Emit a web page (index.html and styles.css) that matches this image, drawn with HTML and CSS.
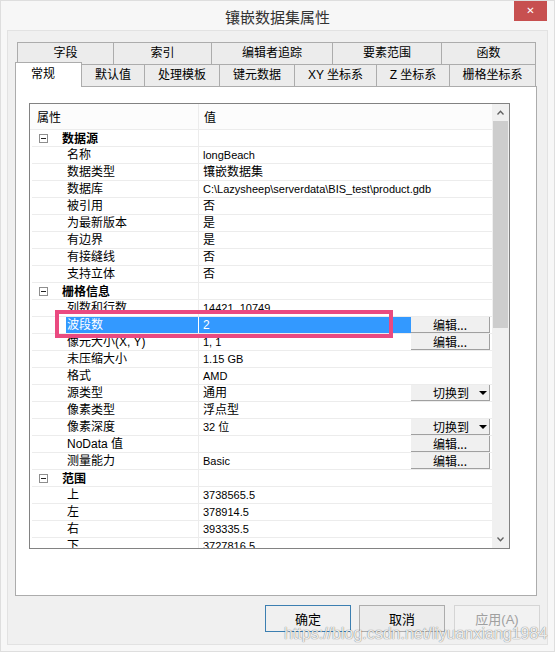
FILE: index.html
```html
<!DOCTYPE html>
<html lang="zh-CN">
<head>
    <meta charset="UTF-8">
    <title>镶嵌数据集属性</title>
    <link rel="stylesheet" href="styles.css">
</head>
<body>
<div class="window">
    <!-- 标题栏 -->
    <div class="titlebar">
        <div class="title">镶嵌数据集属性</div>
        <div class="close">&#x2715;</div>
    </div>

    <div class="client">
        <!-- 选项卡 -->
        <div class="tabs-top">
            <div class="tab" style="width:96px">字段</div>
            <div class="tab" style="width:98px">索引</div>
            <div class="tab" style="width:121px">编辑者追踪</div>
            <div class="tab" style="width:109px">要素范围</div>
            <div class="tab last" style="width:95px">函数</div>
        </div>
        <div class="tabs-bottom">
            <div class="tab active" style="width:67px">常规</div>
            <div class="tab" style="width:63px">默认值</div>
            <div class="tab" style="width:75px">处理模板</div>
            <div class="tab" style="width:75px">键元数据</div>
            <div class="tab" style="width:82px">XY 坐标系</div>
            <div class="tab" style="width:73px">Z 坐标系</div>
            <div class="tab last" style="width:87px">栅格坐标系</div>
        </div>

        <div class="panel">
            <div class="grid">
                <div class="grid-main">
                    <div class="grid-head">
                        <div class="h-name">属性</div>
                        <div class="h-val">值</div>
                    </div>

                    <div class="row cat"><div class="name"><span class="minus"></span>数据源</div><div class="val"><span class="v"></span></div></div>
                    <div class="row"><div class="name">名称</div><div class="val"><span class="v">longBeach</span></div></div>
                    <div class="row"><div class="name">数据类型</div><div class="val"><span class="v cn">镶嵌数据集</span></div></div>
                    <div class="row"><div class="name">数据库</div><div class="val"><span class="v">C:\Lazysheep\serverdata\BIS_test\product.gdb</span></div></div>
                    <div class="row"><div class="name">被引用</div><div class="val"><span class="v cn">否</span></div></div>
                    <div class="row"><div class="name">为最新版本</div><div class="val"><span class="v cn">是</span></div></div>
                    <div class="row"><div class="name">有边界</div><div class="val"><span class="v cn">是</span></div></div>
                    <div class="row"><div class="name">有接缝线</div><div class="val"><span class="v cn">否</span></div></div>
                    <div class="row"><div class="name">支持立体</div><div class="val"><span class="v cn">否</span></div></div>

                    <div class="row cat"><div class="name"><span class="minus"></span>栅格信息</div><div class="val"><span class="v"></span></div></div>
                    <div class="row"><div class="name">列数和行数</div><div class="val"><span class="v">14421, 10749</span></div></div>
                    <div class="row sel"><div class="name">波段数</div><div class="val"><span class="v">2</span><span class="cell-btn">编辑...</span></div></div>
                    <div class="row"><div class="name">像元大小(X, Y)</div><div class="val"><span class="v">1, 1</span><span class="cell-btn">编辑...</span></div></div>
                    <div class="row"><div class="name">未压缩大小</div><div class="val"><span class="v">1.15 GB</span></div></div>
                    <div class="row"><div class="name">格式</div><div class="val"><span class="v">AMD</span></div></div>
                    <div class="row"><div class="name">源类型</div><div class="val"><span class="v cn">通用</span><span class="cell-btn drop">切换到<span class="arrow"></span></span></div></div>
                    <div class="row"><div class="name">像素类型</div><div class="val"><span class="v cn">浮点型</span></div></div>
                    <div class="row"><div class="name">像素深度</div><div class="val"><span class="v">32 位</span><span class="cell-btn drop">切换到<span class="arrow"></span></span></div></div>
                    <div class="row"><div class="name">NoData 值</div><div class="val"><span class="v"></span><span class="cell-btn">编辑...</span></div></div>
                    <div class="row"><div class="name">测量能力</div><div class="val"><span class="v">Basic</span><span class="cell-btn">编辑...</span></div></div>

                    <div class="row cat"><div class="name"><span class="minus"></span>范围</div><div class="val"><span class="v"></span></div></div>
                    <div class="row"><div class="name">上</div><div class="val"><span class="v">3738565.5</span></div></div>
                    <div class="row"><div class="name">左</div><div class="val"><span class="v">378914.5</span></div></div>
                    <div class="row"><div class="name">右</div><div class="val"><span class="v">393335.5</span></div></div>
                    <div class="row"><div class="name">下</div><div class="val"><span class="v">3727816.5</span></div></div>
                </div>

                <!-- 滚动条 -->
                <div class="sb">
                    <div class="sb-arrow"><svg width="7" height="5" viewBox="0 0 7 5"><path d="M0.5 4.5 L3.5 1.2 L6.5 4.5" fill="none" stroke="#606060" stroke-width="1.3"/></svg></div>
                    <div class="sb-thumb"></div>
                    <div class="sb-track"></div>
                    <div class="sb-arrow"><svg width="7" height="5" viewBox="0 0 7 5"><path d="M0.5 0.5 L3.5 3.8 L6.5 0.5" fill="none" stroke="#606060" stroke-width="1.3"/></svg></div>
                </div>

                <!-- 标注框 -->
                <div class="mark"></div>
            </div>
        </div>

        <div class="buttons">
            <button class="btn default">确定</button>
            <button class="btn">取消</button>
            <button class="btn disabled">应用(A)</button>
        </div>
    </div>

    <div class="watermark">https://blog.csdn.net/liyuanxiang1984</div>
</div>
</body>
</html>
```

FILE: styles.css
```css
body {
    margin: 0;
    font-family: "Noto Sans CJK SC", sans-serif;
    font-size: 12px;
    color: #000;
}

.window {
    position: relative;
    width: 555px;
    height: 652px;
    box-sizing: border-box;
    background-color: #f7f7f7;
    border: 1px solid #dedede;
    overflow: hidden;
}

/* 标题栏 */
.titlebar {
    display: flex;
    height: 29px;
}

.title {
    flex: 1;
    padding-left: 40px;
    text-align: center;
    line-height: 32px;
    font-size: 15px;
    color: #333;
}

.close {
    width: 33px;
    height: 20px;
    margin-right: 7px;
    background-color: #c75050;
    color: #fff;
    font-family: "DejaVu Sans", sans-serif;
    font-size: 10px;
    font-weight: bold;
    text-align: center;
    line-height: 20px;
}

.client {
    margin: 0 6px 0 6px;
    height: 615px;
    box-sizing: border-box;
    background-color: #f0f0f0;
    border: 1px solid #e2e2e2;
    padding: 11px 10px 0 7px;
}

/* 选项卡 */
.tabs-top,
.tabs-bottom {
    display: flex;
    height: 22px;
}

.tabs-top {
    margin-left: 2px;
}

.tabs-bottom {
    align-items: flex-end;
}

.tab {
    box-sizing: border-box;
    height: 22px;
    border-top: 1px solid #acacac;
    border-left: 1px solid #acacac;
    background-color: #ececec;
    text-align: center;
    line-height: 21px;
    font-family: "Liberation Sans", "Noto Sans CJK SC", sans-serif;
}

.tab.last {
    border-right: 1px solid #acacac;
}

.tab.active {
    position: relative;
    z-index: 1;
    height: 25px;
    margin-bottom: -1px;
    border-right: 1px solid #acacac;
    margin-right: -1px;
    background-color: #fff;
    text-align: left;
    padding-left: 15px;
    line-height: 22px;
}

.panel {
    box-sizing: border-box;
    width: 522px;
    height: 510px;
    background-color: #fff;
    border: 1px solid #acacac;
    padding: 16px 0 0 13px;
}

/* 属性表格 */
.grid {
    position: relative;
    display: flex;
    box-sizing: border-box;
    width: 481px;
    height: 446px;
    border: 1px solid #828282;
}

.grid-main {
    flex: 1;
    overflow: hidden;
}

.grid-head {
    display: flex;
    height: 25px;
    border-bottom: 1px solid #ececec;
    background-color: #fcfcfc;
    line-height: 26px;
}

.h-name {
    box-sizing: border-box;
    width: 169px;
    padding-left: 7px;
    border-right: 1px solid #ececec;
}

.h-val {
    padding-left: 5px;
}

.row {
    display: flex;
    height: 16px;
    border-bottom: 1px solid #ececec;
    margin-left: 2px;
    line-height: 16px;
}

.name {
    box-sizing: border-box;
    width: 167px;
    padding-left: 35px;
    border-right: 1px solid #ececec;
    white-space: nowrap;
    overflow: hidden;
    font-family: "Liberation Sans", "Noto Sans CJK SC", sans-serif;
}

.cat .name {
    display: flex;
    align-items: center;
    padding-left: 7px;
    font-weight: bold;
    font-family: "Noto Sans CJK SC", sans-serif;
}

.minus {
    position: relative;
    box-sizing: border-box;
    width: 9px;
    height: 9px;
    margin-right: 14px;
    border: 1px solid #8e8e8e;
}

.minus::after {
    content: "";
    position: absolute;
    left: 1px;
    top: 3px;
    width: 5px;
    height: 1px;
    background-color: #222;
}

.val {
    flex: 1;
    display: flex;
}

.v {
    flex: 1;
    padding-left: 4px;
    font-family: "Liberation Sans", "Noto Sans CJK SC", sans-serif;
    font-size: 11px;
    white-space: nowrap;
}

.v.cn {
    font-size: 12px;
}

.row.sel .name {
    margin-left: 34px;
    width: 133px;
    padding-left: 1px;
    background-color: #3399ff;
    color: #fff;
    border-right-color: #fff;
}

.row.sel .v {
    background-color: #3399ff;
    color: #fff;
    font-size: 12px;
}

.cell-btn {
    display: flex;
    box-sizing: border-box;
    width: 79px;
    height: 16px;
    margin-right: 2px;
    justify-content: center;
    background-color: #f0f0f0;
    border-right: 1px solid #a0a0a0;
    border-bottom: 1px solid #a0a0a0;
    line-height: 15px;
}

.cell-btn.drop {
    justify-content: flex-start;
    padding-left: 22px;
}

.arrow {
    margin: 6px 2px 0 auto;
    width: 0;
    height: 0;
    border-left: 4px solid transparent;
    border-right: 4px solid transparent;
    border-top: 4px solid #000;
}

/* 滚动条 */
.sb {
    display: flex;
    flex-direction: column;
    width: 17px;
    background-color: #f0f0f0;
}

.sb-arrow {
    height: 17px;
    display: flex;
    align-items: center;
    justify-content: center;
}

.sb-thumb {
    height: 207px;
    margin: 0 1px;
    background-color: #cdcdcd;
}

.sb-track {
    flex: 1;
}

/* 红色标注 */
.mark {
    position: absolute;
    left: 25px;
    top: 206px;
    width: 338px;
    height: 28px;
    box-sizing: border-box;
    border: 4px solid #ea4a80;
}

/* 底部按钮 */
.buttons {
    display: flex;
    justify-content: flex-end;
    gap: 8px;
    margin-top: 9px;
    margin-right: -3px;
}

.btn {
    width: 86px;
    height: 27px;
    background-color: #ececec;
    border: 1px solid #acacac;
    font-family: "Noto Sans CJK SC", sans-serif;
    font-size: 13px;
    color: #000;
    padding: 0;
}

.btn.default {
    border-color: #3c7fb1;
    background-color: #f0f0f0;
}

.btn.disabled {
    margin-left: 1px;
    color: #a0a0a0;
    border-color: #d5d5d5;
    background-color: #f2f2f2;
    font-family: "Liberation Sans", "Noto Sans CJK SC", sans-serif;
}

.watermark {
    position: absolute;
    left: 283px;
    top: 624px;
    font-family: "Liberation Sans", sans-serif;
    font-size: 16px;
    color: rgba(255, 255, 255, 0.9);
    text-shadow: 0 0 1px rgba(0, 0, 0, 0.45), 0 0 1px rgba(0, 0, 0, 0.3);
    white-space: nowrap;
}
```
